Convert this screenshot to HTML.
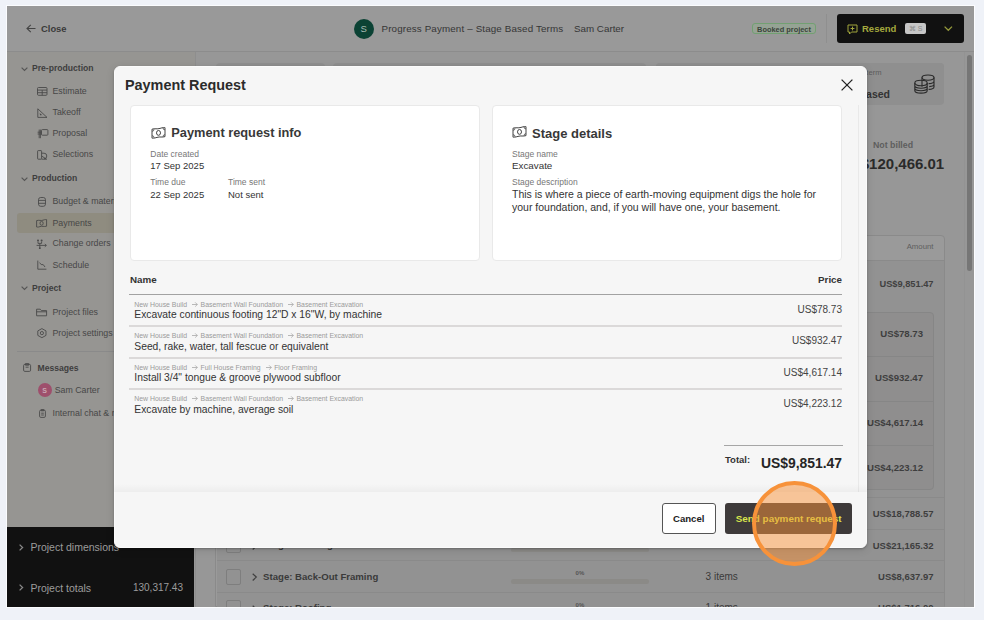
<!DOCTYPE html><html><head><meta charset="utf-8"><style>
html,body{margin:0;padding:0}
body{width:984px;height:620px;position:relative;overflow:hidden;background:#eff2f8;font-family:"Liberation Sans",sans-serif}
.t{position:absolute;white-space:nowrap;line-height:1}
.r{position:absolute;box-sizing:border-box}
svg.r{overflow:visible}
</style></head><body>

<div class="r" style="left:6px;top:5px;width:969px;height:603px;background:#fbfcfe;"></div>
<div class="r" style="left:7px;top:6px;width:967px;height:601px;background:#979797;"></div>
<div class="r" style="left:7px;top:6px;width:967px;height:45px;background:#999999;"></div>
<div class="r" style="left:7px;top:51px;width:967px;height:1px;background:#8c8c8c;"></div>
<svg class="r" style="left:26px;top:24px;" width="10" height="9" viewBox="0 0 10 9"><path d="M9.5 4.5H1M4.8 0.8L1 4.5l3.8 3.7" fill="none" stroke="#444" stroke-width="1.1"/></svg>
<div class="t" style="left:41px;top:24.24px;font-size:9.4px;font-weight:700;color:#3a3a3a;">Close</div>
<div class="r" style="left:353.6px;top:18.5px;width:20px;height:20px;border-radius:50%;background:#0b4234"></div>
<div class="t" style="left:163.8px;width:400px;text-align:center;top:23.87px;font-size:9.6px;font-weight:400;color:#a9bdb5;">S</div>
<div class="t" style="left:381.5px;top:24.00px;font-size:9.8px;font-weight:400;color:#363636;letter-spacing:0.14px">Progress Payment – Stage Based Terms</div>
<div class="t" style="left:574px;top:24.00px;font-size:9.8px;font-weight:400;color:#363636;">Sam Carter</div>
<div class="r" style="left:752px;top:23.4px;width:64px;height:10.800000000000004px;background:#95a394;border:1px solid #72a072;border-radius:3px"></div>
<div class="t" style="left:584px;width:400px;text-align:center;top:25.54px;font-size:7.4px;font-weight:700;color:#3b433b;">Booked project</div>
<div class="r" style="left:826px;top:14px;width:1px;height:29px;background:#8f8f8f;"></div>
<div class="r" style="left:837px;top:14px;width:127px;height:29px;background:#111111;border-radius:3px"></div>
<svg class="r" style="left:847px;top:23.5px;" width="11" height="11" viewBox="0 0 11 11"><path d="M1 1h9v7H4.5L2.5 10V8H1z" fill="none" stroke="#a2a63c" stroke-width="1"/><path d="M5.5 2.6v3.8M3.6 4.5h3.8" stroke="#a2a63c" stroke-width="1"/></svg>
<div class="t" style="left:862px;top:23.96px;font-size:9.5px;font-weight:700;color:#a5aa3e;">Resend</div>
<div class="r" style="left:905px;top:22.5px;width:21px;height:11.700000000000003px;background:#c6c6c6;border-radius:2px"></div>
<div class="t" style="left:715.5px;width:400px;text-align:center;top:25.07px;font-size:7px;font-weight:400;color:#8a8a8a;">⌘ S</div>
<svg class="r" style="left:944px;top:26.2px;" width="9" height="6" viewBox="0 0 9 6"><path d="M0.6 0.6l3.7 3.7 3.7-3.7" fill="none" stroke="#959a3c" stroke-width="1.3"/></svg>
<div class="r" style="left:7px;top:52px;width:188px;height:475px;background:#969592;"></div>
<div class="r" style="left:195px;top:52px;width:1px;height:555px;background:#8e8e8e;"></div>
<div class="r" style="left:7px;top:527px;width:187px;height:80px;background:#111111;"></div>
<svg class="r" style="left:21px;top:67px;" width="7" height="4" viewBox="0 0 7 4"><path d="M0.6 0.6l2.9 2.9 2.9-2.9" fill="none" stroke="#555" stroke-width="1.15"/></svg>
<div class="t" style="left:32px;top:63.52px;font-size:8.6px;font-weight:700;color:#3e3e3e;">Pre-production</div>
<div class="t" style="left:52.5px;top:87.15px;font-size:8.8px;font-weight:400;color:#474747;">Estimate</div>
<div class="t" style="left:52.5px;top:107.75px;font-size:8.8px;font-weight:400;color:#474747;">Takeoff</div>
<div class="t" style="left:52.5px;top:128.75px;font-size:8.8px;font-weight:400;color:#474747;">Proposal</div>
<div class="t" style="left:52.5px;top:149.75px;font-size:8.8px;font-weight:400;color:#474747;">Selections</div>
<svg class="r" style="left:21px;top:177px;" width="7" height="4" viewBox="0 0 7 4"><path d="M0.6 0.6l2.9 2.9 2.9-2.9" fill="none" stroke="#555" stroke-width="1.15"/></svg>
<div class="t" style="left:32px;top:173.72px;font-size:8.6px;font-weight:700;color:#3e3e3e;">Production</div>
<div class="r" style="left:17px;top:212.6px;width:178px;height:20.0px;background:#8f8c80;border-radius:3px"></div>
<div class="t" style="left:52.5px;top:197.15px;font-size:8.8px;font-weight:400;color:#474747;">Budget &amp; materials</div>
<div class="t" style="left:52.5px;top:218.55px;font-size:8.8px;font-weight:400;color:#474747;">Payments</div>
<div class="t" style="left:52.5px;top:239.15px;font-size:8.8px;font-weight:400;color:#474747;">Change orders</div>
<div class="t" style="left:52.5px;top:260.55px;font-size:8.8px;font-weight:400;color:#474747;">Schedule</div>
<svg class="r" style="left:21px;top:286px;" width="7" height="4" viewBox="0 0 7 4"><path d="M0.6 0.6l2.9 2.9 2.9-2.9" fill="none" stroke="#555" stroke-width="1.15"/></svg>
<div class="t" style="left:32px;top:284.32px;font-size:8.6px;font-weight:700;color:#3e3e3e;">Project</div>
<div class="t" style="left:52.5px;top:307.95px;font-size:8.8px;font-weight:400;color:#474747;">Project files</div>
<div class="t" style="left:52.5px;top:328.75px;font-size:8.8px;font-weight:400;color:#474747;">Project settings</div>
<div class="r" style="left:17px;top:351px;width:178px;height:1px;background:#8a8a8a;"></div>
<div class="t" style="left:37.5px;top:363.52px;font-size:8.6px;font-weight:700;color:#3e3e3e;">Messages</div>
<div class="r" style="left:37.5px;top:383px;width:14px;height:14px;border-radius:50%;background:#9e4f6c"></div>
<div class="t" style="left:-155.5px;width:400px;text-align:center;top:387.07px;font-size:7px;font-weight:700;color:#c9a8b4;">S</div>
<div class="t" style="left:54.7px;top:385.85px;font-size:8.8px;font-weight:400;color:#474747;">Sam Carter</div>
<div class="t" style="left:52.5px;top:409.05px;font-size:8.8px;font-weight:400;color:#474747;">Internal chat &amp; notes</div>
<svg class="r" style="left:37px;top:87.2px;" width="10" height="8.5" viewBox="0 0 10 8.5"><rect x="0.5" y="0.5" width="9.5" height="7.8" rx="1" fill="none" stroke="#4a4a4a" stroke-width="0.9"/><path d="M0.5 3.1h9.5M0.5 5.7h9.5M5.2 3.1v5.2" fill="none" stroke="#4a4a4a" stroke-width="0.9"/></svg>
<svg class="r" style="left:37px;top:107.8px;" width="10.5" height="10" viewBox="0 0 10.5 10"><path d="M0.8 0.8v8.6h9.2z" fill="none" stroke="#4a4a4a" stroke-width="0.9"/><path d="M3 5.6l1.4 1.6" fill="none" stroke="#4a4a4a" stroke-width="0.9"/><circle cx="3.6" cy="6.6" r="0.8" fill="#4a4a4a"/></svg>
<svg class="r" style="left:36.5px;top:128.5px;" width="11.5" height="9.5" viewBox="0 0 11.5 9.5"><rect x="4.5" y="0.6" width="6.4" height="5.6" rx="0.8" fill="none" stroke="#4a4a4a" stroke-width="0.9"/><path d="M2.2 0.6v8.6M3.4 0.6v8.6M0.6 3.2h3.8M0.6 5h3.8" fill="none" stroke="#4a4a4a" stroke-width="0.9"/></svg>
<svg class="r" style="left:37px;top:149.6px;" width="10.5" height="10" viewBox="0 0 10.5 10"><rect x="0.6" y="0.6" width="4" height="8.6" rx="0.6" fill="none" stroke="#4a4a4a" stroke-width="0.9"/><path d="M4.6 3.2h2.4a2.8 2.8 0 0 1 0 5.6M4.6 6l5 3.2H4.6" fill="none" stroke="#4a4a4a" stroke-width="0.9"/></svg>
<svg class="r" style="left:38.2px;top:196.9px;" width="8" height="9.8" viewBox="0 0 8 9.8"><rect x="0.5" y="0.5" width="7" height="8.8" rx="2.2" fill="none" stroke="#4a4a4a" stroke-width="0.9"/><path d="M0.8 3.4h6.4M0.8 6.3h6.4" fill="none" stroke="#4a4a4a" stroke-width="0.9"/></svg>
<svg class="r" style="left:36.4px;top:218.8px;" width="11.2" height="8.6" viewBox="0 0 11.2 8.6"><path d="M0.6 1.6C3 0.8 5 2 7 1.2S10 0.6 10.6 0.6V7.2C8 8 6 6.8 4 7.6S1.2 8 0.6 8z" fill="none" stroke="#4a4a4a" stroke-width="0.9"/><ellipse cx="5.6" cy="4.3" rx="1.6" ry="1.9" fill="none" stroke="#4a4a4a" stroke-width="0.9"/></svg>
<svg class="r" style="left:36.2px;top:239px;" width="12" height="10.5" viewBox="0 0 12 10.5"><circle cx="2" cy="1.6" r="1" fill="#4a4a4a"/><circle cx="5.6" cy="1.6" r="1" fill="#4a4a4a"/><path d="M2 2.6v1.8h3.6V2.6M3.8 4.4v5.2M0.6 6.4h9.6M8.8 5l1.6 1.4-1.6 1.4" fill="none" stroke="#4a4a4a" stroke-width="0.9"/><circle cx="3.8" cy="9.2" r="0.9" fill="#4a4a4a"/></svg>
<svg class="r" style="left:37px;top:259.8px;" width="10" height="10" viewBox="0 0 10 10"><path d="M0.8 0.6v8.6h8.6" fill="none" stroke="#4a4a4a" stroke-width="0.9"/><path d="M2.6 2.6l1.6 2h2l1.8 2.4" fill="none" stroke="#4a4a4a" stroke-width="0.9"/></svg>
<svg class="r" style="left:36.2px;top:307.6px;" width="11.4" height="8.8" viewBox="0 0 11.4 8.8"><path d="M0.6 7.8V1.2h3.6l1.2 1.4h5.2v5.2z" fill="none" stroke="#4a4a4a" stroke-width="0.9"/><path d="M0.6 3.8h10" fill="none" stroke="#4a4a4a" stroke-width="0.9"/></svg>
<svg class="r" style="left:37.2px;top:328.2px;" width="9.8" height="10.2" viewBox="0 0 9.8 10.2"><path d="M4.9 0.6l4.1 2.3v4.5l-4.1 2.3-4.1-2.3V2.9z" fill="none" stroke="#4a4a4a" stroke-width="0.9"/><circle cx="4.9" cy="5.1" r="1.6" fill="none" stroke="#4a4a4a" stroke-width="0.9"/></svg>
<svg class="r" style="left:23px;top:363px;" width="8.2" height="8.8" viewBox="0 0 8.2 8.8"><rect x="0.6" y="1.4" width="7" height="7" rx="1.2" fill="none" stroke="#4a4a4a" stroke-width="0.9"/><path d="M2.4 0.6h3.4v1.6H2.4z" fill="none" stroke="#4a4a4a" stroke-width="0.9"/><path d="M2.6 4.2h3" fill="none" stroke="#4a4a4a" stroke-width="0.9"/></svg>
<svg class="r" style="left:38.8px;top:409px;" width="7" height="9" viewBox="0 0 7 9"><rect x="0.6" y="1.2" width="5.8" height="7.2" rx="1.2" fill="none" stroke="#4a4a4a" stroke-width="0.9"/><path d="M2.2 0.6h2.6v1.2H2.2zM2.2 4.2h2.6M2.2 6h2.6" fill="none" stroke="#4a4a4a" stroke-width="0.9"/></svg>
<div class="r" style="left:216px;top:62.6px;width:109px;height:17.4px;background:#8f8f8f;border-radius:4px"></div>
<div class="r" style="left:333px;top:62.6px;width:313px;height:17.4px;background:#8f8f8f;border-radius:4px"></div>
<div class="r" style="left:656px;top:62.6px;width:288px;height:17.4px;background:#8f8f8f;border-radius:4px"></div>
<svg class="r" style="left:19px;top:544px;" width="4" height="7" viewBox="0 0 4 7"><path d="M0.6 0.6l3 2.9-3 2.9" fill="none" stroke="#888" stroke-width="1.3"/></svg>
<div class="t" style="left:30.4px;top:542.31px;font-size:10.5px;font-weight:400;color:#9c9c9c;">Project dimensions</div>
<svg class="r" style="left:19px;top:584px;" width="4" height="7" viewBox="0 0 4 7"><path d="M0.6 0.6l3 2.9-3 2.9" fill="none" stroke="#888" stroke-width="1.3"/></svg>
<div class="t" style="left:30.4px;top:582.51px;font-size:10.5px;font-weight:400;color:#9c9c9c;">Project totals</div>
<div class="t" style="right:801px;top:582.93px;font-size:10px;font-weight:400;color:#9c9c9c;">130,317.43</div>
<div class="r" style="left:964px;top:52px;width:1px;height:555px;background:#939393;"></div>
<div class="r" style="left:967.4px;top:55px;width:4.2000000000000455px;height:216px;background:#767676;border-radius:3px"></div>
<div class="r" style="left:656px;top:62.6px;width:288px;height:42.4px;background:#8f8f8f;border-radius:4px"></div>
<div class="t" style="right:102.5px;top:68.57px;font-size:7.6px;font-weight:400;color:#5c5c5c;">Payment term</div>
<div class="t" style="right:94px;top:89.11px;font-size:10.5px;font-weight:700;color:#333;">Stage Based</div>
<svg class="r" style="left:914px;top:74px;" width="21" height="20.5" viewBox="0 0 21 20.5"><g fill="none" stroke="#2a2a2a" stroke-width="1.1"><ellipse cx="14" cy="3.6" rx="6" ry="2.6"/><path d="M8 3.6v9.2M20 3.6v9.2c0 1.4-2.4 2.6-5.4 2.6M20 7c0 1.4-2.4 2.6-5.4 2.6M20 10.2c0 1.2-2 2.2-4.8 2.4"/><ellipse cx="7" cy="9" rx="6.2" ry="2.7"/><path d="M0.8 9v7.4c0 1.5 2.8 2.7 6.2 2.7s6.2-1.2 6.2-2.7V9M0.8 11.6c0 1.5 2.8 2.7 6.2 2.7s6.2-1.2 6.2-2.7M0.8 14c0 1.5 2.8 2.7 6.2 2.7s6.2-1.2 6.2-2.7"/></g></svg>
<div class="t" style="left:873px;top:140.75px;font-size:8.8px;font-weight:700;color:#5e5e5e;">Not billed</div>
<div class="t" style="right:39.799999999999955px;top:156.30px;font-size:15px;font-weight:700;color:#2a2a2a;">$120,466.01</div>
<div class="r" style="left:215.4px;top:235px;width:729.4px;height:372px;background:#9a9a9a;border:1px solid #8a8a8a;border-radius:4px 4px 0 0"></div>
<div class="r" style="left:216px;top:259.5px;width:729px;height:1.0px;background:#8a8a8a;"></div>
<div class="t" style="right:50.5px;top:243.40px;font-size:7.8px;font-weight:400;color:#5e5e5e;">Amount</div>
<div class="r" style="left:217px;top:260.5px;width:727px;height:237.5px;background:#929292;"></div>
<div class="t" style="right:50.5px;top:280.47px;font-size:9.25px;font-weight:700;color:#404040;">US$9,851.47</div>
<div class="r" style="left:600px;top:311.7px;width:334px;height:178.3px;background:#8f8e8e;border:1px solid #868686;border-radius:4px"></div>
<div class="r" style="left:600px;top:356px;width:334px;height:1px;background:#868686;"></div>
<div class="r" style="left:600px;top:400.5px;width:334px;height:1.0px;background:#868686;"></div>
<div class="r" style="left:600px;top:445px;width:334px;height:1px;background:#868686;"></div>
<div class="t" style="right:61px;top:329.07px;font-size:9.6px;font-weight:700;color:#3e3e3e;">US$78.73</div>
<div class="t" style="right:61px;top:373.47px;font-size:9.6px;font-weight:700;color:#3e3e3e;">US$932.47</div>
<div class="t" style="right:61px;top:418.47px;font-size:9.6px;font-weight:700;color:#3e3e3e;">US$4,617.14</div>
<div class="t" style="right:61px;top:463.07px;font-size:9.6px;font-weight:700;color:#3e3e3e;">US$4,223.12</div>
<div class="r" style="left:217px;top:498px;width:727px;height:109px;background:#929292;"></div>
<div class="r" style="left:217px;top:497px;width:727px;height:1px;background:#8a8a8a;"></div>
<div class="r" style="left:217px;top:529px;width:727px;height:1px;background:#8a8a8a;"></div>
<div class="r" style="left:217px;top:560px;width:727px;height:1px;background:#8a8a8a;"></div>
<div class="r" style="left:217px;top:591.5px;width:727px;height:1.0px;background:#8a8a8a;"></div>
<div class="t" style="right:50.5px;top:509.16px;font-size:9.5px;font-weight:700;color:#3e3e3e;">US$18,788.57</div>
<div class="t" style="right:50.5px;top:540.66px;font-size:9.5px;font-weight:700;color:#3e3e3e;">US$21,165.32</div>
<div class="t" style="right:50.5px;top:571.96px;font-size:9.5px;font-weight:700;color:#3e3e3e;">US$8,637.97</div>
<div class="t" style="right:50.5px;top:603.46px;font-size:9.5px;font-weight:700;color:#3e3e3e;">US$1,716.00</div>
<div class="r" style="left:225.7px;top:537px;width:15.600000000000023px;height:16px;background:transparent;border:1px solid #7e7e7e;border-radius:2px"></div>
<svg class="r" style="left:252.2px;top:541.5px;" width="5.5" height="8" viewBox="0 0 5.5 8"><path d="M0.7 0.7l3.6 3.4-3.6 3.4" fill="none" stroke="#404040" stroke-width="1.2"/></svg>
<div class="t" style="left:263.1px;top:540.47px;font-size:9.6px;font-weight:700;color:#3a3a3a;">Stage: Framing</div>
<div class="t" style="left:379.9px;width:400px;text-align:center;top:538.92px;font-size:6px;font-weight:700;color:#555;">0%</div>
<div class="r" style="left:511px;top:547.7px;width:137.79999999999995px;height:4.7999999999999545px;background:#8b8a87;border-radius:3px"></div>
<div class="t" style="left:705.6px;top:540.43px;font-size:10px;font-weight:400;color:#3a3a3a;">3 items</div>
<div class="r" style="left:225.7px;top:568.5px;width:15.600000000000023px;height:16.0px;background:transparent;border:1px solid #7e7e7e;border-radius:2px"></div>
<svg class="r" style="left:252.2px;top:573.0px;" width="5.5" height="8" viewBox="0 0 5.5 8"><path d="M0.7 0.7l3.6 3.4-3.6 3.4" fill="none" stroke="#404040" stroke-width="1.2"/></svg>
<div class="t" style="left:263.1px;top:571.97px;font-size:9.6px;font-weight:700;color:#3a3a3a;">Stage: Back-Out Framing</div>
<div class="t" style="left:379.9px;width:400px;text-align:center;top:570.42px;font-size:6px;font-weight:700;color:#555;">0%</div>
<div class="r" style="left:511px;top:579.2px;width:137.79999999999995px;height:4.7999999999999545px;background:#8b8a87;border-radius:3px"></div>
<div class="t" style="left:705.6px;top:571.93px;font-size:10px;font-weight:400;color:#3a3a3a;">3 items</div>
<div class="r" style="left:225.7px;top:600px;width:15.600000000000023px;height:16px;background:transparent;border:1px solid #7e7e7e;border-radius:2px"></div>
<svg class="r" style="left:252.2px;top:604.5px;" width="5.5" height="8" viewBox="0 0 5.5 8"><path d="M0.7 0.7l3.6 3.4-3.6 3.4" fill="none" stroke="#404040" stroke-width="1.2"/></svg>
<div class="t" style="left:263.1px;top:603.47px;font-size:9.6px;font-weight:700;color:#3a3a3a;">Stage: Roofing</div>
<div class="t" style="left:379.9px;width:400px;text-align:center;top:601.92px;font-size:6px;font-weight:700;color:#555;">0%</div>
<div class="r" style="left:511px;top:610.7px;width:137.79999999999995px;height:4.7999999999999545px;background:#8b8a87;border-radius:3px"></div>
<div class="t" style="left:705.6px;top:603.43px;font-size:10px;font-weight:400;color:#3a3a3a;">1 items</div>
<div class="r" style="left:0px;top:608px;width:984px;height:12px;background:#eff2f8;"></div>
<div class="r" style="left:6px;top:607px;width:969px;height:1px;background:#fbfcfe;"></div>
<div class="r" style="left:114px;top:66px;width:753px;height:482px;background:#f6f6f6;border:1px solid #fbfbfb;border-radius:6px;box-shadow:0 1px 2px rgba(0,0,0,0.22),0 2px 8px rgba(0,0,0,0.12);overflow:hidden">
</div>
<div class="t" style="left:125px;top:77.61px;font-size:14.4px;font-weight:700;color:#2b2b2b;">Payment Request</div>
<svg class="r" style="left:841px;top:79px;" width="12" height="12" viewBox="0 0 12 12"><path d="M0.6 0.6l10.8 10.8M11.4 0.6L0.6 11.4" stroke="#222" stroke-width="1.3"/></svg>
<div class="r" style="left:858px;top:104.5px;width:1px;height:387.5px;background:#e9e9e9;"></div>
<div class="r" style="left:130px;top:104.6px;width:350px;height:156.4px;background:#ffffff;border:1px solid #e9e9e9;border-radius:4px"></div>
<div class="r" style="left:492px;top:104.6px;width:350px;height:156.4px;background:#ffffff;border:1px solid #e9e9e9;border-radius:4px"></div>
<svg class="r" style="left:150.5px;top:126.6px;" width="15" height="12" viewBox="0 0 15 12"><path d="M1 2.2C4 1.2 6 2.4 9 1.4S13 .6 14 .6V9.6C11 10.6 9 9.4 6 10.4S2 11 1 11.2z" fill="none" stroke="#444" stroke-width="1"/><ellipse cx="7.5" cy="5.9" rx="2" ry="2.4" fill="none" stroke="#444" stroke-width="1"/><path d="M1 4.3a2 2 0 0 0 2-2M12 .9a2 2 0 0 0 2 2M14 7.7a2 2 0 0 0-2 2M3 10.7a2 2 0 0 0-2-2" fill="none" stroke="#444" stroke-width="0.8"/></svg>
<div class="t" style="left:171.3px;top:126.76px;font-size:12.8px;font-weight:700;color:#383838;">Payment request info</div>
<div class="t" style="left:150.3px;top:149.50px;font-size:8.5px;font-weight:400;color:#777;">Date created</div>
<div class="t" style="left:150.3px;top:160.96px;font-size:9.5px;font-weight:400;color:#333;">17 Sep 2025</div>
<div class="t" style="left:150.3px;top:178.00px;font-size:8.5px;font-weight:400;color:#777;">Time due</div>
<div class="t" style="left:150.3px;top:189.76px;font-size:9.5px;font-weight:400;color:#333;">22 Sep 2025</div>
<div class="t" style="left:228px;top:178.00px;font-size:8.5px;font-weight:400;color:#777;">Time sent</div>
<div class="t" style="left:228px;top:189.76px;font-size:9.5px;font-weight:400;color:#333;">Not sent</div>
<svg class="r" style="left:512.2px;top:126.4px;" width="15" height="12" viewBox="0 0 15 12"><path d="M1 2.2C4 1.2 6 2.4 9 1.4S13 .6 14 .6V9.6C11 10.6 9 9.4 6 10.4S2 11 1 11.2z" fill="none" stroke="#444" stroke-width="1"/><ellipse cx="7.5" cy="5.9" rx="2" ry="2.4" fill="none" stroke="#444" stroke-width="1"/><path d="M1 4.3a2 2 0 0 0 2-2M12 .9a2 2 0 0 0 2 2M14 7.7a2 2 0 0 0-2 2M3 10.7a2 2 0 0 0-2-2" fill="none" stroke="#444" stroke-width="0.8"/></svg>
<div class="t" style="left:532px;top:126.90px;font-size:13px;font-weight:700;color:#383838;">Stage details</div>
<div class="t" style="left:512px;top:149.80px;font-size:8.5px;font-weight:400;color:#777;">Stage name</div>
<div class="t" style="left:512px;top:161.00px;font-size:9.8px;font-weight:400;color:#333;">Excavate</div>
<div class="t" style="left:512px;top:178.00px;font-size:8.5px;font-weight:400;color:#777;">Stage description</div>
<div class="t" style="left:512px;top:189.11px;font-size:10.5px;font-weight:400;color:#333;">This is where a piece of earth-moving equipment digs the hole for</div>
<div class="t" style="left:512px;top:201.91px;font-size:10.5px;font-weight:400;color:#333;">your foundation, and, if you will have one, your basement.</div>
<div class="t" style="left:130px;top:275.40px;font-size:9.8px;font-weight:700;color:#333;">Name</div>
<div class="t" style="right:142px;top:275.40px;font-size:9.8px;font-weight:700;color:#333;">Price</div>
<div class="r" style="left:129px;top:294px;width:713px;height:1px;background:#a2a2a2;"></div>
<div class="t" style="left:134.3px;top:301.66px;font-size:6.9px;font-weight:400;color:#9a9a9a;">New House Build <svg width="6" height="5" style="margin:0 2.5px 0 3px;vertical-align:0.3px"><path d="M0 2.5h5.4M3.2 0.4l2.1 2.1-2.1 2.1" stroke="#a8a8a8" fill="none" stroke-width="0.8"/></svg>Basement Wall Foundation <svg width="6" height="5" style="margin:0 2.5px 0 3px;vertical-align:0.3px"><path d="M0 2.5h5.4M3.2 0.4l2.1 2.1-2.1 2.1" stroke="#a8a8a8" fill="none" stroke-width="0.8"/></svg>Basement Excavation</div>
<div class="t" style="left:134.3px;top:310.48px;font-size:10.3px;font-weight:400;color:#333;">Excavate continuous footing 12"D x 16"W, by machine</div>
<div class="t" style="right:142px;top:304.74px;font-size:10px;font-weight:400;color:#444;">US$78.73</div>
<div class="r" style="left:129px;top:325px;width:713px;height:2px;background:#dbd9d9;"></div>
<div class="t" style="left:134.3px;top:333.16px;font-size:6.9px;font-weight:400;color:#9a9a9a;">New House Build <svg width="6" height="5" style="margin:0 2.5px 0 3px;vertical-align:0.3px"><path d="M0 2.5h5.4M3.2 0.4l2.1 2.1-2.1 2.1" stroke="#a8a8a8" fill="none" stroke-width="0.8"/></svg>Basement Wall Foundation <svg width="6" height="5" style="margin:0 2.5px 0 3px;vertical-align:0.3px"><path d="M0 2.5h5.4M3.2 0.4l2.1 2.1-2.1 2.1" stroke="#a8a8a8" fill="none" stroke-width="0.8"/></svg>Basement Excavation</div>
<div class="t" style="left:134.3px;top:341.98px;font-size:10.3px;font-weight:400;color:#333;">Seed, rake, water, tall fescue or equivalent</div>
<div class="t" style="right:142px;top:336.24px;font-size:10px;font-weight:400;color:#444;">US$932.47</div>
<div class="r" style="left:129px;top:357px;width:713px;height:2px;background:#dbd9d9;"></div>
<div class="t" style="left:134.3px;top:364.66px;font-size:6.9px;font-weight:400;color:#9a9a9a;">New House Build <svg width="6" height="5" style="margin:0 2.5px 0 3px;vertical-align:0.3px"><path d="M0 2.5h5.4M3.2 0.4l2.1 2.1-2.1 2.1" stroke="#a8a8a8" fill="none" stroke-width="0.8"/></svg>Full House Framing <svg width="6" height="5" style="margin:0 2.5px 0 3px;vertical-align:0.3px"><path d="M0 2.5h5.4M3.2 0.4l2.1 2.1-2.1 2.1" stroke="#a8a8a8" fill="none" stroke-width="0.8"/></svg>Floor Framing</div>
<div class="t" style="left:134.3px;top:373.48px;font-size:10.3px;font-weight:400;color:#333;">Install 3/4" tongue &amp; groove plywood subfloor</div>
<div class="t" style="right:142px;top:367.74px;font-size:10px;font-weight:400;color:#444;">US$4,617.14</div>
<div class="r" style="left:129px;top:388px;width:713px;height:2px;background:#dbd9d9;"></div>
<div class="t" style="left:134.3px;top:396.16px;font-size:6.9px;font-weight:400;color:#9a9a9a;">New House Build <svg width="6" height="5" style="margin:0 2.5px 0 3px;vertical-align:0.3px"><path d="M0 2.5h5.4M3.2 0.4l2.1 2.1-2.1 2.1" stroke="#a8a8a8" fill="none" stroke-width="0.8"/></svg>Basement Wall Foundation <svg width="6" height="5" style="margin:0 2.5px 0 3px;vertical-align:0.3px"><path d="M0 2.5h5.4M3.2 0.4l2.1 2.1-2.1 2.1" stroke="#a8a8a8" fill="none" stroke-width="0.8"/></svg>Basement Excavation</div>
<div class="t" style="left:134.3px;top:404.98px;font-size:10.3px;font-weight:400;color:#333;">Excavate by machine, average soil</div>
<div class="t" style="right:142px;top:399.24px;font-size:10px;font-weight:400;color:#444;">US$4,223.12</div>
<div class="r" style="left:724px;top:444.5px;width:118.5px;height:1.0px;background:#a6a6a6;"></div>
<div class="t" style="left:725px;top:454.66px;font-size:9.5px;font-weight:700;color:#333;">Total:</div>
<div class="t" style="right:142px;top:457.43px;font-size:13.9px;font-weight:700;color:#252525;">US$9,851.47</div>
<div class="r" style="left:114px;top:484px;width:753px;height:8px;background:transparent;background:linear-gradient(to bottom,rgba(0,0,0,0),rgba(0,0,0,0.035))"></div>
<div class="r" style="left:662px;top:503px;width:53.5px;height:31px;background:#ffffff;border:1px solid #555;border-radius:3px"></div>
<div class="t" style="left:488.70000000000005px;width:400px;text-align:center;top:514.37px;font-size:9.6px;font-weight:700;color:#222;">Cancel</div>
<div class="r" style="left:725.3px;top:503px;width:126.70000000000005px;height:31px;background:#3e3a3a;border-radius:3px"></div>
<div class="t" style="left:588.7px;width:400px;text-align:center;top:514.12px;font-size:9.9px;font-weight:700;color:#d9e64c;">Send payment request</div>
<div class="r" style="left:752.4px;top:481px;width:84.8px;height:84.8px;border-radius:50%;border:4px solid #f7923a;background:rgba(247,146,58,0.5)"></div>
</body></html>
